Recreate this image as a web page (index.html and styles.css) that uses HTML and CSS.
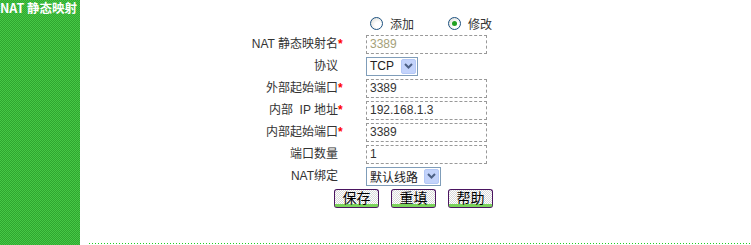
FILE: index.html
```html
<!DOCTYPE html>
<html>
<head>
    <meta charset="utf-8">
    <title>NAT 静态映射</title>
    <link rel="stylesheet" href="styles.css">
</head>
<body>

<div class="page">
    <div class="side">
        <div class="side-title">NAT 静态映射</div>
    </div>

    <div class="main">
        <div class="form-body">
            <div class="radio-row">
                <span class="radio"></span><span class="radio-label">添加</span>
                <span class="radio checked"></span><span class="radio-label">修改</span>
            </div>

            <label class="lbl">NAT 静态映射名<span class="req">*</span></label>
            <div class="fld"><span class="txt dim">3389</span></div>

            <label class="lbl">协议<span class="req hide">*</span></label>
            <div class="fld"><span class="sel sel-tcp"><span class="sel-val">TCP</span><span class="sel-btn"><svg width="9" height="6" viewBox="0 0 9 6"><path d="M1 1 L4.5 4.5 L8 1" fill="none" stroke="#4d6185" stroke-width="2"/></svg></span></span></div>

            <label class="lbl">外部起始端口<span class="req">*</span></label>
            <div class="fld"><span class="txt">3389</span></div>

            <label class="lbl">内部&nbsp; IP 地址<span class="req">*</span></label>
            <div class="fld"><span class="txt">192.168.1.3</span></div>

            <label class="lbl">内部起始端口<span class="req">*</span></label>
            <div class="fld"><span class="txt">3389</span></div>

            <label class="lbl">端口数量<span class="req hide">*</span></label>
            <div class="fld"><span class="txt">1</span></div>

            <label class="lbl">NAT绑定<span class="req hide">*</span></label>
            <div class="fld"><span class="sel sel-line"><span class="sel-val">默认线路</span><span class="sel-btn"><svg width="9" height="6" viewBox="0 0 9 6"><path d="M1 1 L4.5 4.5 L8 1" fill="none" stroke="#4d6185" stroke-width="2"/></svg></span></span></div>

            <div class="buttons">
                <button class="btn">保存</button>
                <button class="btn">重填</button>
                <button class="btn">帮助</button>
            </div>
        </div>

        <div class="dots"></div>
    </div>
</div>

</body>
</html>
```

FILE: styles.css
```css
* {
    font-family: "Liberation Sans", "Noto Sans CJK SC", sans-serif;
    font-size: 12px;
    box-sizing: border-box;
}
body {
    margin: 0;
    background: #fff;
}
.page {
    display: flex;
    height: 245px;
    overflow: hidden;
}
.side {
    width: 80px;
    flex: none;
    background-color: #38b838;
    background-image: repeating-conic-gradient(#2fa62f 0 25%, #46c846 0 50%);
    background-size: 2px 2px;
}
.side-title {
    color: #fff;
    font-family: "Noto Sans CJK SC", sans-serif;
    font-weight: bold;
    font-size: 12.5px;
    line-height: 15px;
    white-space: nowrap;
}
.main {
    flex: 1;
    display: flex;
    flex-direction: column;
}
.form-body {
    display: grid;
    grid-template-columns: 266px 1fr;
    grid-auto-rows: 22px;
    column-gap: 20px;
    padding-top: 11px;
}
.radio-row {
    grid-column: 2;
    height: 24px;
    display: flex;
    align-items: center;
    padding-left: 4px;
}
.radio {
    width: 13px;
    height: 13px;
    border: 1px solid #1c5180;
    border-radius: 50%;
    background: radial-gradient(circle at 65% 65%, #fff 0 30%, #dcdcd6 90%);
    display: flex;
    align-items: center;
    justify-content: center;
}
.radio.checked::after {
    content: "";
    width: 5px;
    height: 5px;
    border-radius: 50%;
    background: #21a121;
}
.radio-label {
    color: #333;
    margin: 0 34px 0 7px;
}
.lbl {
    text-align: right;
    color: #333;
    line-height: 22px;
    white-space: nowrap;
}
.req {
    color: #f00;
    font-weight: bold;
    display: inline-block;
    width: 8px;
    text-align: left;
}
.req.hide {
    visibility: hidden;
}
.fld {
    display: flex;
    align-items: center;
}
.txt {
    width: 121px;
    height: 19px;
    border: 1px dashed #999;
    padding: 0 3px;
    line-height: 17px;
    color: #333;
    font-size: 12px;
}
.txt.dim {
    color: #a59f79;
}
.sel {
    height: 19px;
    border: 1px solid #7f9db9;
    display: flex;
    align-items: center;
    justify-content: space-between;
    padding: 0 1px 0 3px;
    background: #fff;
    color: #222;
}
.sel-tcp {
    width: 52px;
}
.sel-line {
    width: 75px;
}
.sel-val {
    font-size: 12px;
}
.sel-btn {
    width: 15px;
    height: 15px;
    background: #c3d3fb;
    border: 1px solid #b4c8f6;
    border-radius: 2px;
    display: flex;
    align-items: center;
    justify-content: center;
}
.buttons {
    grid-column: 1 / 3;
    display: flex;
    align-items: center;
    gap: 12px;
    padding-left: 254px;
}
.btn {
    width: 45px;
    height: 18px;
    padding: 0;
    border: 1px solid #4a1460;
    border-bottom: 3px solid #7ad35a;
    border-radius: 3px;
    background-color: #f2f2f2;
    background-image: repeating-conic-gradient(#fff 0 25%, #d8d8d8 0 50%);
    background-size: 2px 2px;
    box-shadow: 0 1px 0 #4a1460;
    font-size: 14px;
    line-height: 14px;
    color: #000;
    font-family: "Noto Sans CJK SC", sans-serif;
}
.dots {
    margin-top: auto;
    margin-left: 9px;
    margin-bottom: 1px;
    height: 1px;
    background-image: linear-gradient(to right, #22cc22 1px, transparent 1px);
    background-size: 3px 1px;
}
```
